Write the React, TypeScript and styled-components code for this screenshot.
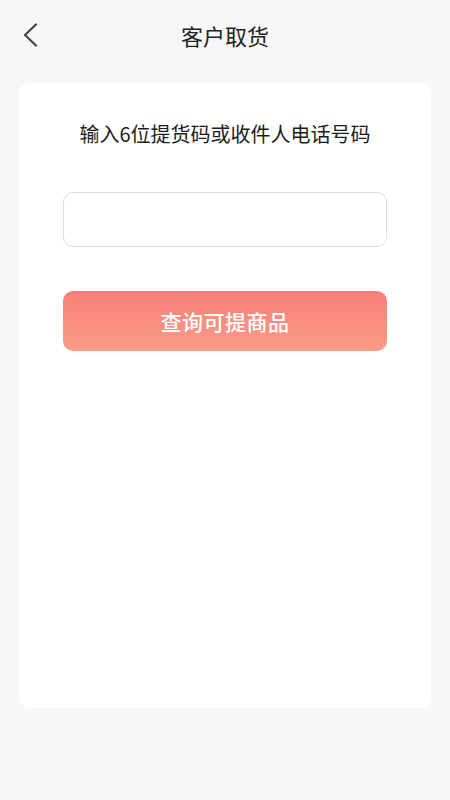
import React from "react";
import styled, { createGlobalStyle } from "styled-components";

const GlobalStyle = createGlobalStyle`
  html, body {
    margin: 0;
    padding: 0;
    background: #f7f7f7;
    font-family: "Noto Sans CJK SC", "Noto Sans", sans-serif;
  }
`;

const Page = styled.div`
  width: 450px;
  height: 800px;
  background: #f7f7f7;
  display: flex;
  flex-direction: column;
  align-items: center;
`;

const Header = styled.div`
  width: 100%;
  height: 70px;
  display: grid;
  grid-template-columns: 72px 1fr 72px;
  align-items: center;
`;

const BackButton = styled.button`
  border: 0;
  background: none;
  padding: 0 0 0 22px;
  height: 100%;
  display: flex;
  align-items: center;
  cursor: pointer;
`;

const Title = styled.h1`
  margin: 0;
  text-align: center;
  font-size: 22px;
  font-weight: 400;
  color: #222;
`;

const Card = styled.div`
  margin-top: 13px;
  width: 412px;
  height: 625px;
  box-sizing: border-box;
  background: #fff;
  border-radius: 10px;
  padding-top: 37px;
  display: flex;
  flex-direction: column;
  align-items: center;
`;

const Hint = styled.p`
  margin: 0;
  font-size: 20px;
  line-height: 28px;
  color: #1c1c1c;
`;

const CodeInput = styled.input`
  margin-top: 44px;
  width: 324px;
  height: 55px;
  box-sizing: border-box;
  border: 1px solid #dcdcdc;
  border-radius: 10px;
  outline: none;
  padding: 0 16px;
  font-size: 18px;
  font-family: inherit;
`;

const SubmitButton = styled.button`
  margin-top: 44px;
  width: 324px;
  height: 60px;
  border: 0;
  border-radius: 10px;
  background: linear-gradient(180deg, #f97e79 0%, #fb9c87 100%);
  color: #fff;
  font-family: inherit;
  font-size: 21px;
  font-weight: 500;
  letter-spacing: 0.5px;
  cursor: pointer;
`;

export default function App() {
  return (
    <Page>
      <GlobalStyle />
      <Header>
        <BackButton aria-label="返回">
          <svg width="16" height="24" viewBox="0 0 16 24">
            <path d="M14 1.5 L3 12 L14 22.5" fill="none" stroke="#444" strokeWidth="2.2" strokeLinecap="round" strokeLinejoin="round" />
          </svg>
        </BackButton>
        <Title>客户取货</Title>
        <div />
      </Header>
      <Card>
        <Hint>输入6位提货码或收件人电话号码</Hint>
        <CodeInput type="text" />
        <SubmitButton>查询可提商品</SubmitButton>
      </Card>
    </Page>
  );
}
